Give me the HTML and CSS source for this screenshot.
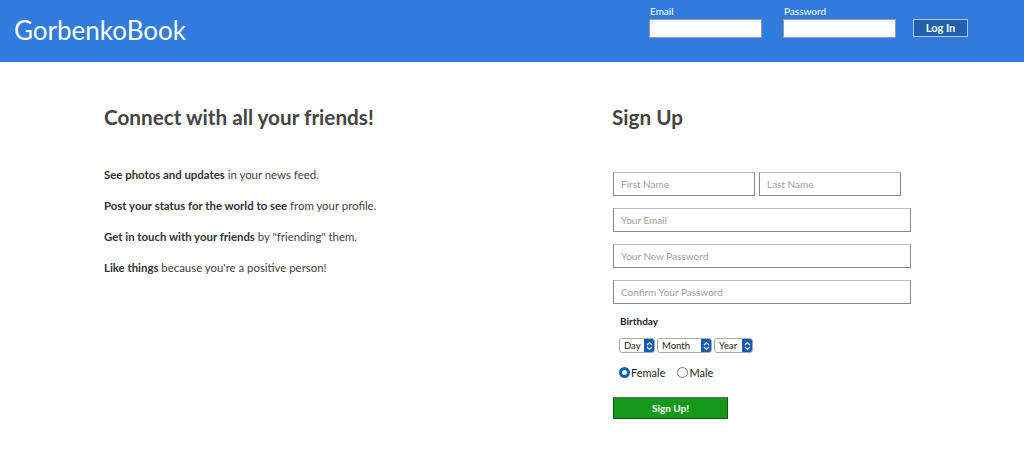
FILE: index.html
```html
<!DOCTYPE html>
<html>
<head>
<meta charset="utf-8">
<link rel="stylesheet" href="styles.css">
</head>
<body>
<header class="topbar">
  <div class="logo">GorbenkoBook</div>
  <form class="login">
    <label class="login-field">
      <span class="login-label">Email</span>
      <input class="login-input" type="text">
    </label>
    <label class="login-field">
      <span class="login-label">Password</span>
      <input class="login-input" type="password">
    </label>
    <button class="login-btn" type="button">Log In</button>
  </form>
</header>
<main class="content">
  <section class="intro">
    <h1 class="title">Connect with all your friends!</h1>
    <ul class="features">
      <li><b>See photos and updates</b> in your news feed.</li>
      <li><b>Post your status for the world to see</b> from your profile.</li>
      <li><b>Get in touch with your friends</b> by "friending" them.</li>
      <li><b>Like things</b> because you're a positive person!</li>
    </ul>
  </section>
  <section class="signup">
    <h1 class="title">Sign Up</h1>
    <form class="signup-form">
      <div class="name-row">
        <input class="field field-half" placeholder="First Name">
        <input class="field field-half" placeholder="Last Name">
      </div>
      <input class="field" placeholder="Your Email">
      <input class="field" placeholder="Your New Password">
      <input class="field" placeholder="Confirm Your Password">
      <div class="birthday-label">Birthday</div>
      <div class="selects">
        <span class="sel sel-day"><span class="sel-text">Day</span><span class="sel-arrow"><svg width="7" height="10" viewBox="0 0 7 10"><path d="M1 4 L3.5 1.5 L6 4 M1 6 L3.5 8.5 L6 6" fill="none" stroke="#fff" stroke-width="1.2"/></svg></span></span>
        <span class="sel sel-month"><span class="sel-text">Month</span><span class="sel-arrow"><svg width="7" height="10" viewBox="0 0 7 10"><path d="M1 4 L3.5 1.5 L6 4 M1 6 L3.5 8.5 L6 6" fill="none" stroke="#fff" stroke-width="1.2"/></svg></span></span>
        <span class="sel sel-year"><span class="sel-text">Year</span><span class="sel-arrow"><svg width="7" height="10" viewBox="0 0 7 10"><path d="M1 4 L3.5 1.5 L6 4 M1 6 L3.5 8.5 L6 6" fill="none" stroke="#fff" stroke-width="1.2"/></svg></span></span>
      </div>
      <div class="gender">
        <label class="radio"><span class="dot dot-on"></span>Female</label>
        <label class="radio"><span class="dot"></span>Male</label>
      </div>
      <button class="signup-btn" type="button">Sign Up!</button>
    </form>
  </section>
</main>
</body>
</html>
```
FILE: styles.css
```css
* { box-sizing: border-box; }
body {
  margin: 0;
  font-family: Lato, "Liberation Sans", sans-serif;
  background: #fff;
  color: #444;
}
.topbar {
  height: 62px;
  background: #307bdd;
  display: flex;
  justify-content: space-between;
  align-items: flex-start;
  padding: 0 56px 0 14px;
}
.logo {
  color: #fff;
  font-size: 26px;
  line-height: 1;
  padding-top: 17px;
}
.login {
  display: flex;
  align-items: flex-start;
  padding-top: 4px;
}
.login-field {
  display: flex;
  flex-direction: column;
  margin-right: 22px;
}
.login-label {
  color: #fff;
  font-size: 10px;
  line-height: 14px;
  padding-left: 0;
}
.login-input {
  width: 113px;
  height: 19px;
  margin: 1px 0 0 -1px;
  border: 1px solid #999;
  background: #fff;
  padding: 0;
}
.login-btn {
  margin: 15px 0 0 -5px;
  width: 55px;
  height: 18px;
  background: #2160ab;
  border: 1px solid #a9c6ee;
  color: #fff;
  font-family: Lato, "Liberation Sans", sans-serif;
  font-weight: bold;
  font-size: 11px;
  padding: 0;
  line-height: 14px;
}
.content {
  display: flex;
  padding: 41px 0 0 104px;
}
.intro { width: 508px; }
.title {
  margin: 0;
  font-size: 20.7px;
  font-weight: bold;
  line-height: 28px;
  color: #444;
}
.features {
  list-style: none;
  margin: 36px 0 0;
  padding: 0;
  font-size: 11.4px;
  line-height: 16px;
  color: #444;
}
.features li { margin-bottom: 15px; }
.features b { color: #333; }
.signup { width: 300px; }
.signup-form {
  display: flex;
  flex-direction: column;
  gap: 12px;
  margin-top: 41px;
  padding-left: 1px;
}
.name-row { display: flex; gap: 4px; }
.field {
  width: 298px;
  height: 24px;
  border: 1px solid #888;
  border-top-color: #bbb;
  padding: 0 7px;
  font-family: Lato, "Liberation Sans", sans-serif;
  font-size: 10px;
  color: #444;
  background: #fff;
  margin: 0;
}
.field::placeholder { color: #a0a0a0; }
.field-half { width: 142px; }
.birthday-label {
  font-size: 10px;
  font-weight: bold;
  color: #222;
  padding-left: 7px;
  margin-top: -2px;
  line-height: 14px;
}
.selects {
  display: flex;
  gap: 2px;
  padding-left: 6px;
  margin-top: -2px;
}
.sel {
  display: inline-flex;
  height: 15px;
  border: 1px solid #aaa;
  border-radius: 3px;
  overflow: hidden;
  font-size: 9.5px;
  color: #222;
  background: #fff;
}
.sel-text { flex: 1; padding-left: 4px; line-height: 13px; }
.sel-arrow {
  width: 10px;
  background: #1159b3;
  display: flex;
  align-items: center;
  justify-content: center;
}
.sel-day { width: 36px; }
.sel-month { width: 55px; }
.sel-year { width: 39px; }
.gender {
  display: flex;
  gap: 12px;
  padding-left: 6px;
  font-size: 11px;
  color: #222;
  margin-top: 1px;
}
.radio { display: inline-flex; align-items: center; gap: 1px; }
.dot {
  width: 11px;
  height: 11px;
  border-radius: 50%;
  border: 1px solid #777;
  background: #fff;
  display: inline-block;
}
.dot-on {
  border: 3px solid #0f5cc0;
  background: #fff;
}
.signup-btn {
  width: 115px;
  height: 22px;
  background: #16991a;
  border: 1px solid #0b5a0d;
  border-top-color: #666;
  color: #fff;
  font-family: Lato, "Liberation Sans", sans-serif;
  font-weight: bold;
  font-size: 10px;
  padding: 0;
  margin-top: 6px;
}
```
